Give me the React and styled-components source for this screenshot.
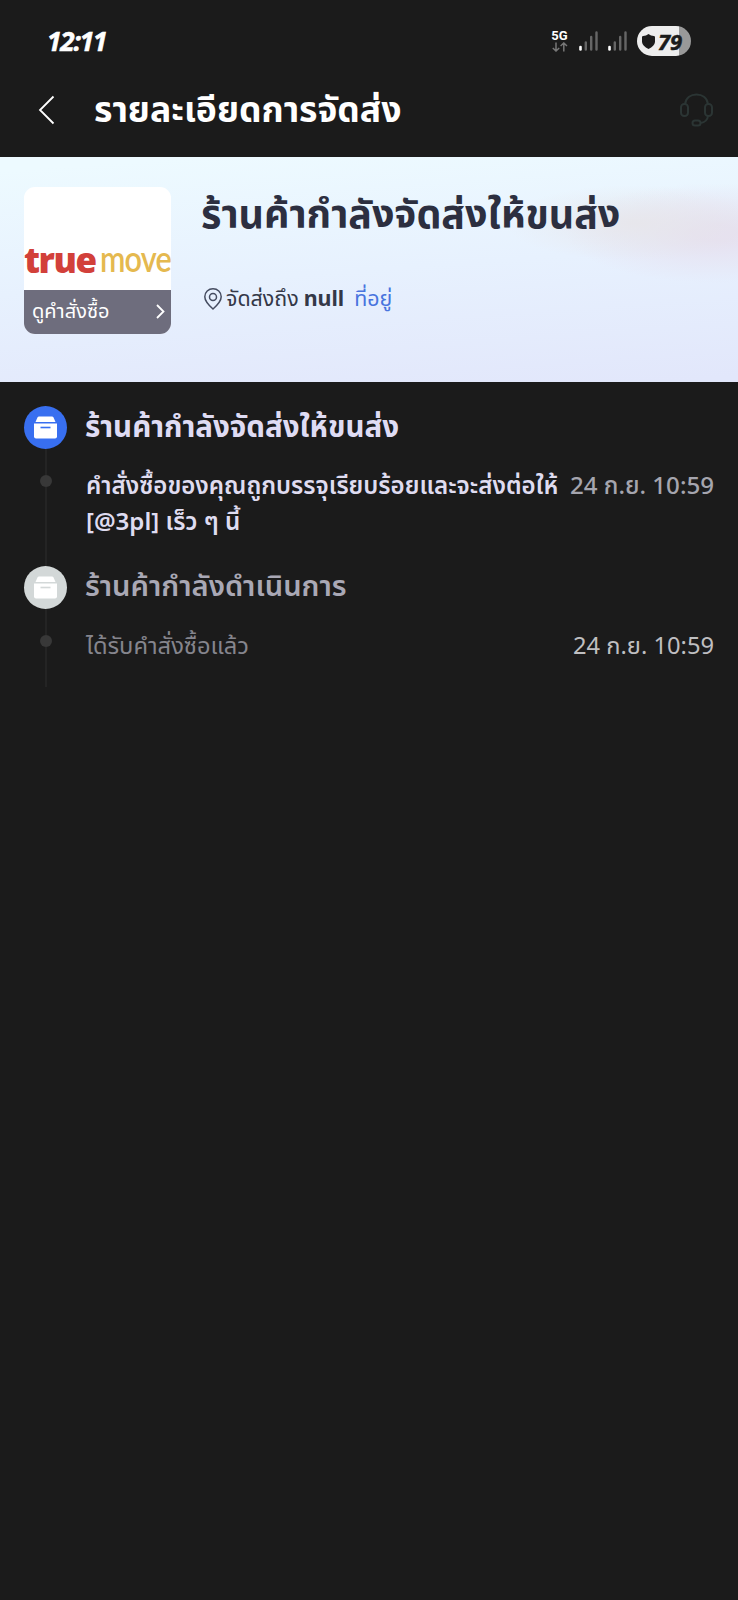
import React from "react";
import styled, { createGlobalStyle } from "styled-components";

const GlobalStyle = createGlobalStyle`
  *,
  *::before,
  *::after {
    box-sizing: border-box;
    margin: 0;
    padding: 0;
  }

  body {
    margin: 0;
    background-color: #1b1b1b;
    font-family: "Noto Sans", "Noto Sans Thai", sans-serif;
  }
`;

const Screen = styled.main`
  width: 738px;
  min-height: 1600px;
  background-color: #1b1b1b;
  overflow: hidden;
`;

const StatusBar = styled.div`
  height: 82px;
  padding: 0 47px 0 47px;
  display: flex;
  align-items: center;
  justify-content: space-between;
`;

const Clock = styled.span`
  color: #fff;
  font-family: "Open Sans", sans-serif;
  font-size: 26px;
  font-style: italic;
  font-weight: 700;
  letter-spacing: -1.1px;
  -webkit-text-stroke: 0.6px #fff;
`;

const StatusIcons = styled.div`
  display: flex;
  align-items: center;
`;

const Network = styled.div`
  width: 17px;
  margin-right: 11px;
  padding-bottom: 2px;
  display: flex;
  flex-direction: column;
  align-items: center;
  color: #fff;
  font-family: Roboto, sans-serif;
  font-size: 13px;
  font-weight: 700;
  line-height: 13px;
`;

const Signal = styled.svg`
  margin-right: 10px;
`;

const Battery = styled.div`
  width: 54px;
  height: 30px;
  border-radius: 15px;
  padding-left: 5px;
  display: flex;
  align-items: center;
  background: linear-gradient(90deg, #ededed 42px, #999 42px);
`;

const BatteryLevel = styled.span`
  margin-left: 3px;
  color: #1b1b1b;
  font-family: "Open Sans", sans-serif;
  font-size: 22px;
  font-style: italic;
  font-weight: 700;
  line-height: 30px;
  -webkit-text-stroke: 0.5px #1b1b1b;
`;

const Header = styled.header`
  height: 75px;
  padding: 0 25px 19px 38px;
  display: flex;
  align-items: center;
`;

const HeaderTitle = styled.h1`
  flex: 1;
  margin: -4px 0 0 38px;
  color: #fff;
  font-size: 35.5px;
  font-weight: 700;
  line-height: 50px;
  white-space: nowrap;
`;

const Summary = styled.section`
  height: 225px;
  padding: 30px 24px;
  display: flex;
  background: radial-gradient(
      ellipse 130px 38px at 635px 66px,
      rgba(231, 230, 234, 0.85),
      rgba(231, 230, 234, 0)
    ),
    radial-gradient(
      ellipse 150px 50px at 715px 76px,
      rgba(230, 222, 237, 0.85) 15%,
      rgba(230, 222, 237, 0)
    ),
    linear-gradient(176deg, #edfaff 5%, #e7f1fe 50%, #e2e7fb 98%);
`;

const Thumb = styled.div`
  width: 147px;
  height: 147px;
  border-radius: 11px;
  display: flex;
  flex-direction: column;
  overflow: hidden;
  background-color: #fff;
`;

const Logo = styled.div`
  height: 103px;
  padding-top: 49px;
  display: flex;
  font-family: "Open Sans", sans-serif;
  line-height: 48px;
  white-space: nowrap;
`;

const LogoTrue = styled.span`
  width: 76px;
  color: #d2403a;
  font-size: 36px;
  font-weight: 800;
  letter-spacing: -1.5px;
  transform: scaleX(0.97);
  transform-origin: left;
`;

const LogoMove = styled.span`
  width: 71px;
  margin-top: -2px;
  color: #e5b94f;
  font-family: Lato, sans-serif;
  font-size: 36px;
  font-weight: 600;
  letter-spacing: -1px;
  transform: scaleX(0.85);
  transform-origin: left;
`;

const ThumbAction = styled.div`
  flex: 1;
  padding: 0 6px 2px 8px;
  display: flex;
  align-items: center;
  justify-content: space-between;
  background-color: #6e6d7d;
  color: #fff;
  font-size: 20px;
  line-height: 42px;
`;

const SummaryBody = styled.div`
  margin: -2px 0 0 30px;
  white-space: nowrap;
`;

const SummaryTitle = styled.h2`
  color: #2c2f40;
  font-size: 39.4px;
  font-weight: 700;
  line-height: 56px;
`;

const Address = styled.p`
  margin-top: 40px;
  display: flex;
  align-items: center;
  color: #343848;
  font-size: 21.4px;
  line-height: 34px;

  svg {
    margin: 2px 4px 0 3px;
  }

  strong {
    margin-left: 5px;
    font-weight: 700;
  }
`;

const AddressLink = styled.a`
  margin-left: 10px;
  color: #4874de;
`;

const Timeline = styled.section`
  padding: 24px 24px 0;
`;

const Step = styled.div`
  display: flex;
  height: ${(props) => props.$height}px;
`;

const Rail = styled.div`
  width: 43px;
  display: flex;
  flex-direction: column;
  align-items: center;
`;

const StepBadge = styled.div`
  width: 43px;
  height: 43px;
  flex: none;
  border-radius: 50%;
  display: flex;
  align-items: center;
  justify-content: center;
  background-color: ${(props) => (props.$active ? "#386ff0" : "#d3d8d8")};
`;

const RailLine = styled.div`
  width: 2px;
  height: ${(props) => props.$height || "auto"};
  flex: ${(props) => (props.$height ? "none" : 1)};
  margin-left: 1px;
  background-color: #242424;
`;

const Dot = styled.div`
  width: 12px;
  height: 12px;
  flex: none;
  margin-left: 1px;
  border-radius: 50%;
  background-color: #383838;
`;

const StepContent = styled.div`
  flex: 1;
  margin: -2px 0 0 18px;
`;

const StepTitle = styled.h3`
  color: ${(props) => (props.$active ? "#dfdcf4" : "#a9a8b5")};
  font-size: ${(props) => (props.$active ? 29.5 : 29.1)}px;
  font-weight: ${(props) => (props.$active ? 700 : 600)};
  line-height: 43px;
  white-space: nowrap;
`;

const StepRow = styled.div`
  margin: 20px 0 0 1px;
  display: flex;
  justify-content: space-between;
  font-size: ${(props) => (props.$active ? 24.1 : 23.7)}px;
  line-height: 36px;
  white-space: nowrap;
`;

const StepText = styled.p`
  color: ${(props) => (props.$active ? "#dfdcf0" : "#85858d")};
  font-weight: ${(props) => (props.$active ? 600 : 400)};
`;

const StepTime = styled.time`
  color: ${(props) => (props.$active ? "#a5a5ae" : "#bfbfc1")};
  font-weight: ${(props) => (props.$active ? 500 : 400)};
`;

const steps = [
  {
    title: "ร้านค้ากำลังจัดส่งให้ขนส่ง",
    lines: ["คำสั่งซื้อของคุณถูกบรรจุเรียบร้อยและจะส่งต่อให้", "[@3pl] เร็ว ๆ นี้"],
    time: "24 ก.ย. 10:59",
    height: 160,
    active: true,
  },
  {
    title: "ร้านค้ากำลังดำเนินการ",
    lines: ["ได้รับคำสั่งซื้อแล้ว"],
    time: "24 ก.ย. 10:59",
    height: 121,
    active: false,
  },
];

function SignalBars() {
  return (
    <Signal width="19" height="20" viewBox="0 0 19 20">
      <g strokeWidth="2.4" strokeLinecap="round">
        <path d="M1.5 16V18.5" stroke="#fff" strokeWidth="2.6" />
        <path d="M6.8 11.5V18.5M12.2 6V18.5M17.5 1.5V18.5" stroke="#666" />
      </g>
    </Signal>
  );
}

function BoxIcon({ lineColor }) {
  return (
    <svg width="23" height="23" viewBox="0 0 23 23">
      <path
        d="M5 .5H18Q19 .5 19.5 1.5L21.5 6H1.5L3.5 1.5Q4 .5 5 .5Z"
        fill="#fff"
      />
      <path d="M0 7.5H23V20.5Q23 22.5 21 22.5H2Q0 22.5 0 20.5Z" fill="#fff" />
      <path d="M6.5 11.5H16.5" stroke={lineColor} strokeWidth="1.6" />
    </svg>
  );
}

function TimelineStep({ step }) {
  return (
    <Step $height={step.height}>
      <Rail>
        <StepBadge $active={step.active}>
          <BoxIcon lineColor={step.active ? "#386ff0" : "#d3d8d8"} />
        </StepBadge>
        <RailLine $height="26px" />
        <Dot />
        <RailLine />
      </Rail>
      <StepContent>
        <StepTitle $active={step.active}>{step.title}</StepTitle>
        <StepRow $active={step.active}>
          <StepText $active={step.active}>
            {step.lines.map((line) => (
              <React.Fragment key={line}>
                {line}
                <br />
              </React.Fragment>
            ))}
          </StepText>
          <StepTime $active={step.active}>{step.time}</StepTime>
        </StepRow>
      </StepContent>
    </Step>
  );
}

export default function App() {
  return (
    <>
      <GlobalStyle />
      <Screen>
        <StatusBar>
          <Clock>12:11</Clock>
          <StatusIcons>
            <Network>
              5G
              <svg width="16" height="10" viewBox="0 0 16 10">
                <path
                  d="M4 .5V9M.8 6L4 9L7.2 6M11.8 9.5V1M8.6 4L11.8 1L15 4"
                  fill="none"
                  stroke="#777"
                  strokeWidth="1.5"
                />
              </svg>
            </Network>
            <SignalBars />
            <SignalBars />
            <Battery>
              <svg width="13" height="15" viewBox="0 0 14 16">
                <path
                  d="M7 0Q9.5 2 12.8 2.2Q14 2.3 14 3.5V8.5Q13.5 13 7 16Q.5 13 0 8.5V3.5Q0 2.3 1.2 2.2Q4.5 2 7 0Z"
                  fill="#1b1b1b"
                />
              </svg>
              <BatteryLevel>79</BatteryLevel>
            </Battery>
          </StatusIcons>
        </StatusBar>
        <Header>
          <svg width="18" height="30" viewBox="0 0 18 30">
            <path
              d="M15.5 1.5L2 15L15.5 28.5"
              fill="none"
              stroke="#fff"
              strokeWidth="1.8"
            />
          </svg>
          <HeaderTitle>รายละเอียดการจัดส่ง</HeaderTitle>
          <svg width="33" height="34" viewBox="0 0 33 34">
            <g fill="none" stroke="#2b3534" strokeWidth="2">
              <rect x="1" y="11" width="7" height="12" rx="3.3" />
              <rect x="25" y="11" width="7" height="12" rx="3.3" />
              <path d="M5 11C6 4.5 11 1.5 16.5 1.5S27 4.5 28 11" />
              <path d="M28 23C27.5 27 25 29.5 20.5 30" />
              <rect x="12.5" y="27.5" width="8" height="5" rx="2.5" />
            </g>
          </svg>
        </Header>
        <Summary>
          <Thumb>
            <Logo>
              <LogoTrue>true</LogoTrue>
              <LogoMove>move</LogoMove>
            </Logo>
            <ThumbAction>
              ดูคำสั่งซื้อ
              <svg width="9" height="15" viewBox="0 0 9 15">
                <path
                  d="M1 1L7.5 7.5L1 14"
                  fill="none"
                  stroke="#fff"
                  strokeWidth="1.8"
                />
              </svg>
            </ThumbAction>
          </Thumb>
          <SummaryBody>
            <SummaryTitle>ร้านค้ากำลังจัดส่งให้ขนส่ง</SummaryTitle>
            <Address>
              <svg width="18" height="22" viewBox="0 0 18 22">
                <g fill="none" stroke="#454c60" strokeWidth="1.5">
                  <path d="M9 21C5 17.5 .8 13.5 .8 8.8C.8 4.2 4.5 .8 9 .8S17.2 4.2 17.2 8.8C17.2 13.5 13 17.5 9 21Z" />
                  <circle cx="9" cy="9" r="3.5" />
                </g>
              </svg>
              จัดส่งถึง<strong>null</strong>
              <AddressLink>ที่อยู่</AddressLink>
            </Address>
          </SummaryBody>
        </Summary>
        <Timeline>
          {steps.map((step) => (
            <TimelineStep key={step.title} step={step} />
          ))}
        </Timeline>
      </Screen>
    </>
  );
}
